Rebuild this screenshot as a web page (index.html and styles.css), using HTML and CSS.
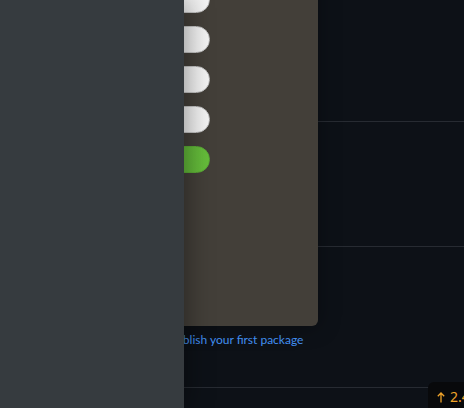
FILE: index.html
```html
<!DOCTYPE html>
<html>
<head>
<meta charset="utf-8">
<link rel="stylesheet" href="styles.css">
</head>
<body>
<main class="page">
  <section class="sec sec-a"></section>
  <section class="sec sec-b"></section>
  <section class="sec sec-c">
    <p class="empty-note">Try publishing a package</p>
    <a class="link" href="#">Publish your first package</a>
  </section>
  <section class="sec sec-d"></section>
</main>

<div class="popover">
  <div class="pill-col">
    <span class="pill"></span>
    <span class="pill"></span>
    <span class="pill"></span>
    <span class="pill"></span>
    <span class="pill pill-green"></span>
  </div>
</div>

<aside class="drawer"></aside>

<div class="badge">
  <svg class="arrow" width="8" height="11" viewBox="0 0 8 11"><path d="M4 10.5V1M0.8 4.2L4 1l3.2 3.2" fill="none" stroke="#f0a42a" stroke-width="1.3"/></svg>
  <span class="ver">2.4.1</span>
</div>
</body>
</html>
```
FILE: styles.css
```css
html, body {
  margin: 0;
  padding: 0;
  background: #0d1117;
  width: 464px;
  height: 408px;
  overflow: hidden;
  font-family: "Lato", "Noto Sans", "Liberation Sans", sans-serif;
}

.page {
  display: flex;
  flex-direction: column;
}

.sec {
  border-bottom: 1px solid #272b32;
  box-sizing: border-box;
}
.sec-a { height: 122px; }
.sec-b { height: 125px; }
.sec-c {
  height: 141px;
  display: flex;
  flex-direction: column;
  justify-content: flex-end;
  padding: 0 0 39px 169px;
}
.sec-d { height: 40px; }

.empty-note {
  margin: 0 0 4px;
  font-size: 12px;
  line-height: 16px;
  color: #7d8590;
  white-space: nowrap;
}
.link {
  font-size: 12px;
  line-height: 16px;
  color: #4493f8;
  text-decoration: none;
  white-space: nowrap;
}

.popover {
  position: absolute;
  left: 60px;
  top: -20px;
  width: 258px;
  height: 346px;
  background: #433f39;
  border-radius: 6px;
  box-shadow: 0 0 22px rgba(0, 0, 0, 0.35);
}

.pill-col {
  display: flex;
  flex-direction: column;
  gap: 13px;
  padding: 6px 0 0 10px;
}
.pill {
  display: block;
  width: 140px;
  height: 27px;
  box-sizing: border-box;
  border-radius: 14px;
  background: linear-gradient(to right, #d6d6d6, #f4f4f4);
  border: 1px solid #c2c2c2;
}
.pill-green {
  background: linear-gradient(to right, #4a9a2e, #66bd3b);
  border-color: #5aaa35;
}

.drawer {
  position: fixed;
  left: 0;
  top: 0;
  width: 184px;
  height: 408px;
  background: #363b3f;
  box-shadow: 4px 0 24px rgba(0, 0, 0, 0.35);
}

.badge {
  position: fixed;
  left: 428px;
  top: 382px;
  width: 36px;
  height: 26px;
  background: #08090b;
  border-radius: 6px 0 0 0;
  color: #f0a42a;
  font-size: 14px;
  line-height: 18px;
  padding: 3px 0 0 9px;
  box-sizing: border-box;
  white-space: nowrap;
  overflow: hidden;
  display: flex;
  align-items: center;
  gap: 5px;
  font-family: "Noto Sans", "Liberation Sans", sans-serif;
}
.arrow {
  flex: none;
  margin-top: 1px;
}
.ver {
  flex: none;
}
```
